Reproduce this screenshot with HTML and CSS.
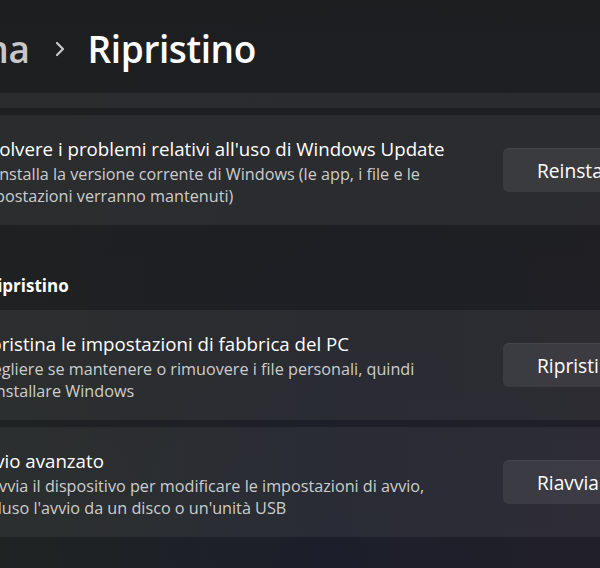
FILE: index.html
```html
<!DOCTYPE html>
<html lang="it">
<head>
<meta charset="utf-8">
<title>Ripristino</title>
<link rel="stylesheet" href="styles.css">
</head>
<body>
<div class="window">
  <header class="breadcrumb">
    <span class="crumb-parent">Sistema</span>
    <svg class="crumb-sep" width="10" height="16" viewBox="0 0 10 16" aria-hidden="true"><path d="M2 2l6 6-6 6" fill="none" stroke="currentColor" stroke-width="2.2" stroke-linecap="round" stroke-linejoin="round"/></svg>
    <span class="crumb-current">Ripristino</span>
  </header>
  <main class="content">
    <div class="card card-partial"></div>
    <section class="card">
      <div class="card-text">
        <div class="card-title">Risolvere i problemi relativi all'uso di Windows Update</div>
        <div class="card-desc">Reinstalla la versione corrente di Windows (le app, i file e le impostazioni verranno mantenuti)</div>
      </div>
      <button class="btn">Reinstalla ora</button>
    </section>
    <h2 class="section-title">Opzioni di ripristino</h2>
    <section class="card">
      <div class="card-text">
        <div class="card-title">Ripristina le impostazioni di fabbrica del PC</div>
        <div class="card-desc">Scegliere se mantenere o rimuovere i file personali, quindi reinstallare Windows</div>
      </div>
      <button class="btn">Ripristina PC</button>
    </section>
    <section class="card">
      <div class="card-text">
        <div class="card-title">Avvio avanzato</div>
        <div class="card-desc">Riavvia il dispositivo per modificare le impostazioni di avvio, incluso l'avvio da un disco o un'unità USB</div>
      </div>
      <button class="btn">Riavvia ora</button>
    </section>
  </main>
</div>
</body>
</html>
```
FILE: styles.css
```css
html, body {
  margin: 0;
  padding: 0;
}
body {
  width: 600px;
  height: 568px;
  overflow: hidden;
  font-family: "Open Sans", "Noto Sans", sans-serif;
  color: #fff;
  background:
    linear-gradient(180deg, #1d1e20 0%, rgba(30,31,33,0.85) 30%, rgba(30,31,33,0) 100%),
    linear-gradient(90deg, #1f2322 0%, #1c1f2b 55%, #211f2a 100%);
}
.window {
  width: 600px;
  height: 568px;
  overflow: hidden;
}
.breadcrumb {
  display: flex;
  align-items: baseline;
  margin-left: -109px;
  padding-top: 26px;
  height: 46px;
  line-height: 46px;
  font-size: 37px;
  letter-spacing: -0.4px;
  font-weight: 600;
  white-space: nowrap;
}
.crumb-parent {
  color: #c8c8c8;
}
.crumb-sep {
  color: #c8c8c8;
  margin: 0 23px 0 25px;
  align-self: center;
}
.crumb-current {
  color: #ffffff;
}
.content {
  margin-top: 21px;
  margin-left: -101px;
  width: 760px;
}
.card {
  display: flex;
  align-items: flex-start;
  box-sizing: border-box;
  height: 110px;
  padding: 0 0 0 75px;
  background: rgba(255,255,255,0.06);
  border-radius: 6px;
  margin-bottom: 7px;
}
.card-partial {
  height: 15px;
  border-radius: 0 0 6px 6px;
}
.card-text {
  flex: none;
  width: 529px;
  padding-top: 21.5px;
}
.card-title {
  font-size: 18.7px;
  line-height: 24px;
  color: #ffffff;
  white-space: nowrap;
}
.card-desc {
  margin-top: 2px;
  margin-left: 2px;
  font-size: 16.2px;
  line-height: 22.5px;
  color: #cdcdcd;
  width: 470px;
}
.btn {
  flex: none;
  align-self: center;
  box-sizing: border-box;
  height: 44px;
  min-width: 150px;
  padding: 0 34px;
  border: none;
  border-top: 1px solid rgba(255,255,255,0.06);
  border-radius: 6px;
  background: rgba(255,255,255,0.075);
  color: #ffffff;
  font-family: inherit;
  font-size: 19.2px;
  text-align: left;
  white-space: nowrap;
}
.section-title {
  margin: 49px 0 12px 0;
  font-size: 17px;
  line-height: 24px;
  font-weight: 700;
  color: #ffffff;
  padding-left: 1px;
}
```
